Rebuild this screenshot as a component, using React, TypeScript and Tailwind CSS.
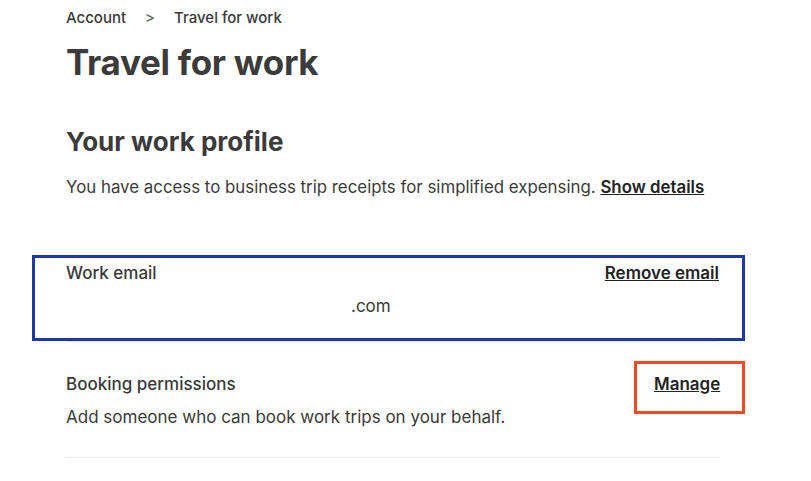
import React from "react";

const App: React.FC = () => (
  <div
    className="w-[811px] h-[481px] bg-white text-[#222222] overflow-hidden"
    style={{ fontFamily: "Inter, 'Noto Sans', sans-serif" }}
  >
    <div className="pl-[66px] pr-[92px]">
      <div className="pt-[9px] flex items-center text-[15px] leading-[18px] font-medium text-[#3a3a3a]">
        <span>Account</span>
        <span className="mx-[19px] text-[#6a6a6a]">&gt;</span>
        <span>Travel for work</span>
      </div>
      <h1 className="mt-[14px] text-[35px] leading-[42px] font-bold tracking-[-0.3px] text-[#3b3b3b]">
        Travel for work
      </h1>
      <h2 className="mt-[43px] text-[26px] leading-[32px] font-bold text-[#3b3b3b]">
        Your work profile
      </h2>
      <p className="mt-[16px] text-[16.85px] leading-[26px] text-[#3a3a3a]">
        You have access to business trip receipts for simplified expensing.{" "}
        <span className="font-semibold underline text-[#222]">Show details</span>
      </p>

      <div className="mt-[55px] -ml-[34px] -mr-[26px] border-[3px] border-[#1b3aa5] pl-[31px] pr-[23px] pt-[3px] pb-[20px]">
        <div className="flex justify-between items-center text-[17px] leading-[24px]">
          <span className="font-medium text-[#3a3a3a]">Work email</span>
          <span className="font-semibold underline text-[#222]">Remove email</span>
        </div>
        <div className="mt-[9px] text-[17px] leading-[24px] text-[#3a3a3a] pl-[285px]">.com</div>
      </div>
      <div className="h-px bg-[#ebebeb]" />

      <div className="mt-[19px] flex justify-between">
        <div className="pt-[11px]">
          <div className="text-[17px] leading-[24px] font-medium text-[#3a3a3a]">
            Booking permissions
          </div>
          <div className="mt-[8px] text-[17px] leading-[26px] text-[#3a3a3a]">
            Add someone who can book work trips on your behalf.
          </div>
        </div>
        <div className="-mr-[26px] border-[3px] border-[#ef4a23] w-[111px] h-[53px] pl-[17px] pt-[8px]">
          <span className="text-[17px] leading-[24px] font-semibold underline text-[#222]">Manage</span>
        </div>
      </div>

      <div className="mt-[27px] h-px bg-[#ebebeb]" />
    </div>
  </div>
);

export default App;
